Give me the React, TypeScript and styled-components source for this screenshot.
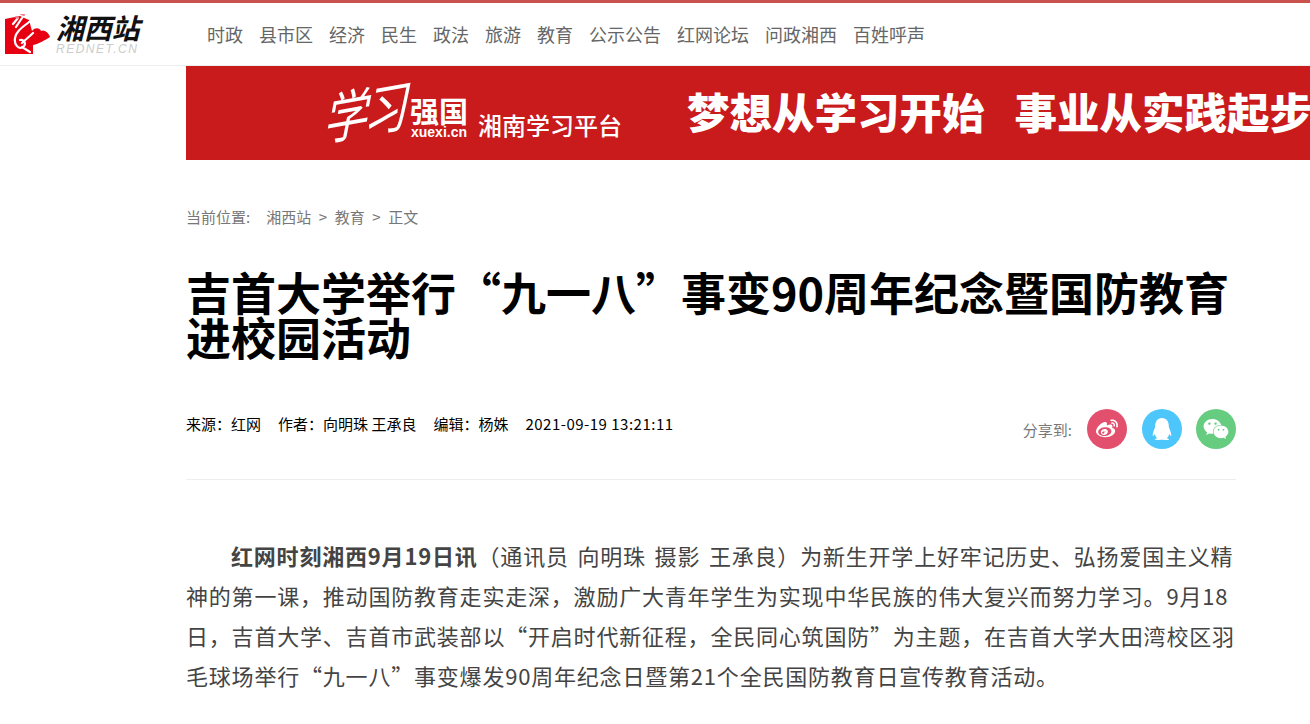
import styled, { createGlobalStyle } from "styled-components";
import { FaWeibo, FaQq, FaWeixin } from "react-icons/fa";

const navItems = ["时政", "县市区", "经济", "民生", "政法", "旅游", "教育", "公示公告", "红网论坛", "问政湘西", "百姓呼声"];

export default function App() {
  return (
    <>
      <GlobalStyle />
      <Header>
        <LogoBox>
          <svg width="46" height="41" viewBox="0 0 46 41">
            <path d="M0 5 L15 2 L24 6 L27 17 C30 13 35 14 36 17 C39 15 44 19 45 23 C40 26 34 30 28 31 L28 40 L0 40 Z" fill="#e60012" />
            <path d="M19 1 L11 13 M13 4 L8 10 M24 8 C18 13 11 17 10 24 C9 30 13 36 18 33 C22 30 19 25 15 26 M17 33 L25 38 M28 19 C24 23 20 26 17 29" fill="none" stroke="#fff" strokeWidth="2.2" strokeLinecap="round" />
            <path d="M19 1 L16 0 M13 4 L11 3" stroke="#f2808a" strokeWidth="2" strokeLinecap="round" />
          </svg>
          <LogoText>
            <LogoName>湘西站</LogoName>
            <LogoSub>REDNET.CN</LogoSub>
          </LogoText>
        </LogoBox>
        <Nav>
          {navItems.map((item) => (
            <NavLink key={item}>{item}</NavLink>
          ))}
        </Nav>
      </Header>

      <Banner>
        <BannerLogo>
          <Brush>学习</Brush>
          <BrandBox>
            <BrandName>强国</BrandName>
            <BrandUrl>xuexi.cn</BrandUrl>
          </BrandBox>
          <Platform>湘南学习平台</Platform>
        </BannerLogo>
        <Slogan>梦想从学习开始</Slogan>
        <Slogan>事业从实践起步</Slogan>
      </Banner>

      <Main>
        <Crumbs>
          <span>当前位置:</span>
          <CrumbLink>湘西站</CrumbLink>
          <Sep>&gt;</Sep>
          <span>教育</span>
          <Sep>&gt;</Sep>
          <span>正文</span>
        </Crumbs>

        <Title>吉首大学举行“九一八”事变90周年纪念暨国防教育进校园活动</Title>

        <MetaRow>
          <Meta>
            <span>来源：红网</span>
            <span>作者：向明珠 王承良</span>
            <span>编辑：杨姝</span>
            <DateText>2021-09-19 13:21:11</DateText>
          </Meta>
          <Share>
            <ShareLabel>分享到:</ShareLabel>
            <ShareButton $bg="#e2506e"><FaWeibo size={22} /></ShareButton>
            <ShareButton $bg="#4dc6fb"><FaQq size={22} /></ShareButton>
            <ShareButton $bg="#66cc80"><FaWeixin size={26} /></ShareButton>
          </Share>
        </MetaRow>

        <Article>
          <strong>红网时刻湘西9月19日讯</strong>（通讯员 向明珠 摄影 王承良）为新生开学上好牢记历史、弘扬爱国主义精神的第一课，推动国防教育走实走深，激励广大青年学生为实现中华民族的伟大复兴而努力学习。9月18日，吉首大学、吉首市武装部以“开启时代新征程，全民同心筑国防”为主题，在吉首大学大田湾校区羽毛球场举行“九一八”事变爆发90周年纪念日暨第21个全民国防教育日宣传教育活动。
        </Article>
      </Main>
    </>
  );
}

const GlobalStyle = createGlobalStyle`
  html, body {
    margin: 0;
    padding: 0;
    background: #fff;
    overflow: hidden;
    font-family: "Noto Sans CJK SC", "Liberation Sans", sans-serif;
  }
`;

const Header = styled.header`
  display: flex;
  align-items: center;
  height: 62px;
  border-top: 3px solid #c9514e;
  border-bottom: 1px solid #eee;
`;

const LogoBox = styled.div`
  display: flex;
  align-items: center;
  gap: 5px;
  width: 207px;
  padding-left: 5px;
  box-sizing: border-box;
`;

const LogoText = styled.div`
  display: flex;
  flex-direction: column;
  gap: 2px;
`;

const LogoName = styled.div`
  font-size: 28px;
  line-height: 28px;
  font-weight: 700;
  font-style: italic;
  color: #111;
  letter-spacing: -0.3px;
`;

const LogoSub = styled.div`
  font-family: "Liberation Sans", sans-serif;
  font-size: 12px;
  line-height: 13px;
  font-style: italic;
  letter-spacing: 1.5px;
  color: #ccc;
`;

const Nav = styled.nav`
  display: flex;
  gap: 16px;
`;

const NavLink = styled.a`
  font-size: 18px;
  color: #666;
`;

const Banner = styled.div`
  display: flex;
  align-items: center;
  margin-left: 186px;
  height: 94px;
  background: #c91a1c;
  color: #fff;
  white-space: nowrap;
  overflow: hidden;
`;

const BannerLogo = styled.div`
  display: flex;
  align-items: flex-end;
  width: 501px;
  padding-left: 137px;
  padding-bottom: 4px;
  box-sizing: border-box;
  flex-shrink: 0;
`;

const Brush = styled.div`
  width: 87px;
  flex-shrink: 0;
  margin-bottom: 5px;
  font-size: 44px;
  line-height: 50px;
  font-style: italic;
  font-weight: 400;
  letter-spacing: -4px;
  transform: skewY(-10deg) scaleY(1.25);
`;

const BrandBox = styled.div`
  display: flex;
  flex-direction: column;
  align-items: center;
  width: 58px;
  margin-right: 10px;
`;

const BrandName = styled.div`
  font-size: 29px;
  line-height: 30px;
  font-weight: 700;
`;

const BrandUrl = styled.div`
  font-family: "Liberation Sans", sans-serif;
  font-size: 14px;
  line-height: 14px;
  font-weight: 700;
`;

const Platform = styled.div`
  font-size: 24px;
  line-height: 28px;
  font-weight: 500;
`;

const Slogan = styled.div`
  font-size: 42.5px;
  line-height: 60px;
  font-weight: 900;
  margin-right: 30px;
  margin-bottom: 4px;
  flex-shrink: 0;
`;

const Main = styled.main`
  width: 1050px;
  margin-left: 186px;
`;

const Crumbs = styled.div`
  display: flex;
  align-items: center;
  margin-top: 47px;
  font-size: 15px;
  line-height: 20px;
  color: #777;

  > span:first-child {
    margin-right: 16px;
  }
`;

const CrumbLink = styled.span``;

const Sep = styled.span`
  margin: 0 7.6px;
`;

const Title = styled.h1`
  margin: 42px 0 0;
  font-size: 45px;
  line-height: 45px;
  font-weight: 700;
  color: #000;
`;

const MetaRow = styled.div`
  display: flex;
  align-items: center;
  justify-content: space-between;
  height: 40px;
  margin-top: 50px;
  padding-bottom: 30px;
  border-bottom: 1px solid #eee;
`;

const Meta = styled.div`
  display: flex;
  gap: 17px;
  font-size: 15px;
  line-height: 20px;
  color: #000;
  margin-bottom: 10px;
`;

const DateText = styled.span`
  letter-spacing: 0.5px;
`;

const Share = styled.div`
  display: flex;
  align-items: center;
`;

const ShareLabel = styled.span`
  font-size: 15px;
  color: #777;
  margin-right: 15px;
`;

const ShareButton = styled.a<{ $bg: string }>`
  display: flex;
  align-items: center;
  justify-content: center;
  width: 40px;
  height: 40px;
  border-radius: 50%;
  margin-left: 14.5px;
  color: #fff;
  background: ${(props) => props.$bg};

  &:first-of-type {
    margin-left: 0;
  }
`;

const Article = styled.p`
  margin: 55px 0 0;
  font-size: 22px;
  line-height: 40px;
  letter-spacing: 0.8px;
  word-spacing: 3px;
  text-indent: 45px;
  color: #444;

  strong {
    font-weight: 700;
  }
`;
